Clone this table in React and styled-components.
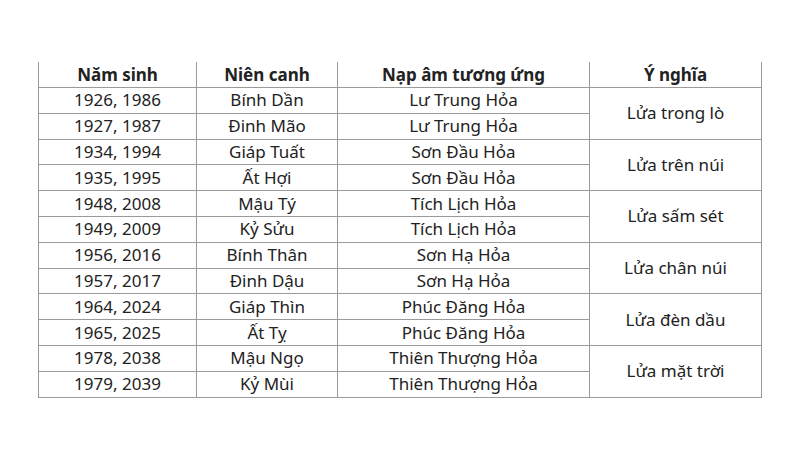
import React from "react";
import styled, { createGlobalStyle } from "styled-components";

const GlobalStyle = createGlobalStyle`
    html, body {
        margin: 0;
        padding: 0;
        background: #fff;
    }
`;

const Page = styled.div`
    width: 800px;
    height: 450px;
    box-sizing: border-box;
    padding: 62px 0 0 38px;
    background: #fff;
    font-family: "Noto Sans", "Liberation Sans", sans-serif;
    color: #222;
`;

const Table = styled.table`
    border-collapse: collapse;
    table-layout: fixed;
    width: 723px;
`;

const Head = styled.th`
    height: 25px;
    padding: 0;
    font-size: 17px;
    font-weight: 700;
    text-align: center;
    border: 1px solid #9a9a9a;
    border-top: none;
`;

const Cell = styled.td`
    height: 24.8px;
    padding: 0;
    font-size: 17px;
    font-weight: 400;
    line-height: 20px;
    text-align: center;
    vertical-align: middle;
    border: 1px solid #9a9a9a;
`;

const rows = [
    ["1926, 1986", "Bính Dần", "Lư Trung Hỏa", "Lửa trong lò"],
    ["1927, 1987", "Đinh Mão", "Lư Trung Hỏa"],
    ["1934, 1994", "Giáp Tuất", "Sơn Đầu Hỏa", "Lửa trên núi"],
    ["1935, 1995", "Ất Hợi", "Sơn Đầu Hỏa"],
    ["1948, 2008", "Mậu Tý", "Tích Lịch Hỏa", "Lửa sấm sét"],
    ["1949, 2009", "Kỷ Sửu", "Tích Lịch Hỏa"],
    ["1956, 2016", "Bính Thân", "Sơn Hạ Hỏa", "Lửa chân núi"],
    ["1957, 2017", "Đinh Dậu", "Sơn Hạ Hỏa"],
    ["1964, 2024", "Giáp Thìn", "Phúc Đăng Hỏa", "Lửa đèn dầu"],
    ["1965, 2025", "Ất Tỵ", "Phúc Đăng Hỏa"],
    ["1978, 2038", "Mậu Ngọ", "Thiên Thượng Hỏa", "Lửa mặt trời"],
    ["1979, 2039", "Kỷ Mùi", "Thiên Thượng Hỏa"],
];

export default function App() {
    return (
        <Page>
            <GlobalStyle />
            <Table>
                <colgroup>
                    <col style={{ width: 158 }} />
                    <col style={{ width: 141 }} />
                    <col style={{ width: 252 }} />
                    <col style={{ width: 172 }} />
                </colgroup>
                <thead>
                    <tr>
                        <Head>Năm sinh</Head>
                        <Head>Niên canh</Head>
                        <Head>Nạp âm tương ứng</Head>
                        <Head>Ý nghĩa</Head>
                    </tr>
                </thead>
                <tbody>
                    {rows.map((r, i) => (
                        <tr key={i}>
                            <Cell>{r[0]}</Cell>
                            <Cell>{r[1]}</Cell>
                            <Cell>{r[2]}</Cell>
                            {r[3] && <Cell rowSpan={2}>{r[3]}</Cell>}
                        </tr>
                    ))}
                </tbody>
            </Table>
        </Page>
    );
}
